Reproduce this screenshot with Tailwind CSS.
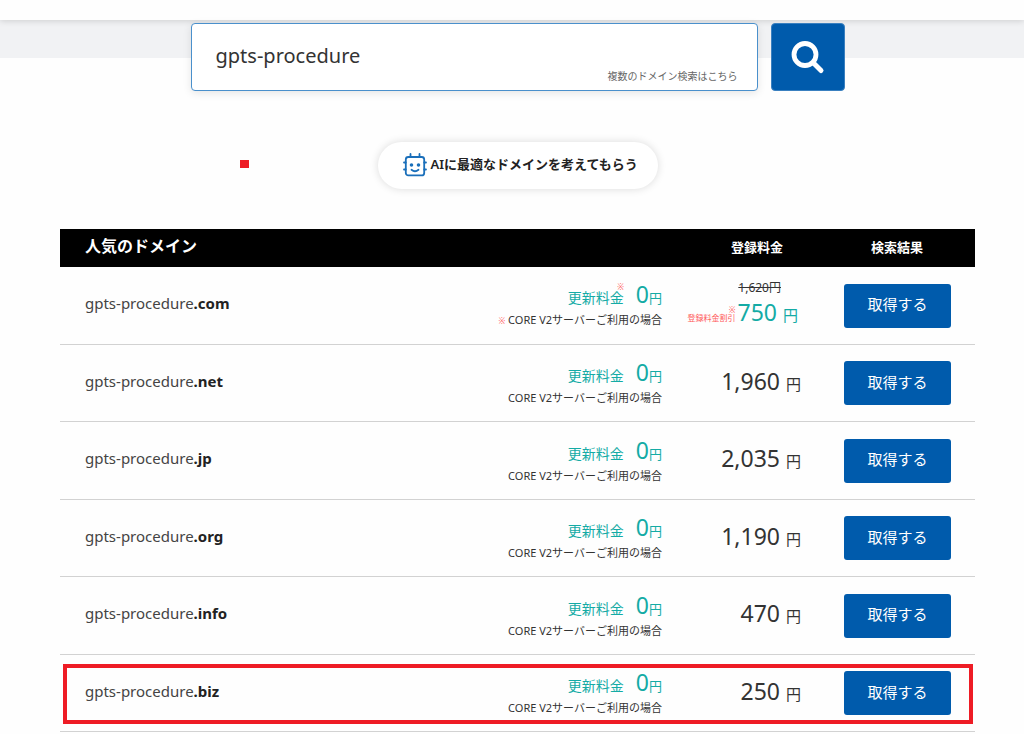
<!DOCTYPE html>
<html lang="ja">
<head>
<meta charset="utf-8">
<meta name="viewport" content="width=device-width, initial-scale=1">
<title>ドメイン検索</title>
<script src="https://cdn.jsdelivr.net/npm/@tailwindcss/browser@4"></script>
</head>
<body class="bg-[#fefefe] font-['Noto_Sans','Noto_Sans_CJK_JP',sans-serif] text-[#333] overflow-x-hidden">
<header class="relative h-5 bg-[#fefefe] shadow-[0_1px_6px_rgba(0,0,0,0.15)]"></header>
<main>
  <div class="h-[38px] bg-[#f1f2f4]"></div>
  <form class="relative -mt-[35px] flex justify-center gap-[13px] pl-[11px]" onsubmit="return false">
    <div class="relative w-[567px]">
      <input type="text" aria-label="ドメイン名" value="gpts-procedure" class="block h-[68px] w-full rounded-[4px] border border-[#4a90cc] bg-white px-6 pb-1 text-xl text-[#333] shadow-[0_2px_8px_rgba(0,0,0,0.1)] outline-none">
      <a href="#" class="absolute right-5 bottom-[7px] text-[10px] leading-4 text-[#666]">複数のドメイン検索はこちら</a>
    </div>
    <button type="submit" aria-label="検索" class="flex h-[68px] w-[74px] items-center justify-center rounded-[4px] border border-[#3a80c0] bg-[#005bac] text-white">
      <svg class="size-9" viewBox="0 0 36 36" fill="none" stroke="currentColor" stroke-linecap="round"><circle cx="15" cy="15.500" r="11" stroke-width="4.800"/><path d="M23.500 24l7.500 7.500" stroke-width="5"/></svg>
    </button>
  </form>

  <div class="relative mt-[51px] flex justify-center pl-[11px]">
    <span class="absolute top-[18px] left-[240px] h-[8px] w-[9px] bg-[#ee1c25]"></span>
    <button type="button" class="flex h-[47px] w-[280px] items-center gap-1 rounded-full bg-white pb-0.5 pl-[25px] text-[13px] font-semibold text-[#222] shadow-[0_0_8px_rgba(0,0,0,0.14)]">
      <svg class="size-6 shrink-0" viewBox="0 0 24 24" fill="none" stroke="#1a6fba" stroke-width="1.800" stroke-linecap="round"><rect x="2.800" y="4" width="18.400" height="18.400" rx="2.500"/><path d="M7.500 1v3M16.500 1v3M1 9.500h1.800M1 16.500h1.800M21.200 9.500H23M21.200 16.500H23M8.500 16.800q3.500 2.800 7 0"/><circle cx="8.500" cy="12" r=".9" fill="#1a6fba"/><circle cx="15.500" cy="12" r=".9" fill="#1a6fba"/></svg>
      <span class="whitespace-nowrap">AIに最適なドメインを考えてもらう</span>
    </button>
  </div>

  <div class="mt-10 pr-[49px] pl-[60px]">
    <table class="w-full table-fixed border-separate border-spacing-0">
      <colgroup><col><col class="w-[190px]"><col class="w-[164px]"><col class="w-[131px]"></colgroup>
      <thead class="bg-black text-[13px] text-white">
        <tr>
          <th scope="col" colspan="2" class="h-[38px] pb-1 pl-[25px] text-left text-base font-bold">人気のドメイン</th>
          <th scope="col" class="pr-[10px] font-bold">登録料金</th>
          <th scope="col" class="pr-[25px] font-bold">検索結果</th>
        </tr>
      </thead>
      <tbody id="rows"></tbody>
    </table>
  </div>
</main>
<script>
const domains = [['com','750'],['net','1,960'],['jp','2,035'],['org','1,190'],['info','470'],['biz','250']];
document.getElementById('rows').innerHTML = domains.map(([tld, price]) => {
  const sale = tld === 'com', pick = tld === 'biz';
  const mark = '<span class="text-[8px] text-[#ff5a5a]">※</span>';
  const cost = sale
    ? `<div class="pr-[17px] text-xs leading-4"><s>1,620円</s></div>
       <div class="flex items-baseline justify-end whitespace-nowrap leading-8 text-[#14aba5]"><span class="relative mr-0.5 text-[8px] leading-none text-[#ff5a5a]">登録料金割引<span class="absolute -top-2 right-0 leading-none">※</span></span><span class="text-[23px]">750</span><span class="ml-1.5 text-[15px]">円</span></div>`
    : `<span class="text-[23px]">${price}</span><span class="ml-1.5 text-[15px]">円</span>`;
  return `<tr class="relative odd:h-[78px] even:h-[77px]">
    <td class="border-b border-[#d2d2d2] pb-1 pl-[25px] text-[15px] text-[#444]">gpts-procedure<b class="text-[#222]">.${tld}</b></td>
    <td class="border-b border-[#d2d2d2] pr-[18px] pb-0.5 text-right whitespace-nowrap">
      <div class="flex items-baseline justify-end leading-7 text-[#14aba5]"><span class="relative mr-3 text-sm leading-none">更新料金${sale ? '<span class="absolute -top-2 right-0 text-[8px] leading-none text-[#ff5a5a]">※</span>' : ''}</span><span class="text-[23px]">0</span><span class="text-[13px]">円</span></div>
      <div class="text-[11px] leading-4">${sale ? mark + ' ' : ''}CORE V2サーバーご利用の場合</div>
    </td>
    <td class="border-b border-[#d2d2d2] ${sale ? 'pr-[46px]' : 'pr-[43px] pb-1'} text-right whitespace-nowrap">${cost}</td>
    <td class="border-b border-[#d2d2d2]"><button type="button" class="block h-11 w-[107px] rounded-[3px] bg-[#005bac] pb-0.5 text-[15px] text-white">取得する</button>${pick ? '<span class="pointer-events-none absolute top-[9px] right-[2px] bottom-[8px] left-[3px] border-4 border-[#ee1c25]"></span>' : ''}</td>
  </tr>`;
}).join('');
</script>
</body>
</html>
